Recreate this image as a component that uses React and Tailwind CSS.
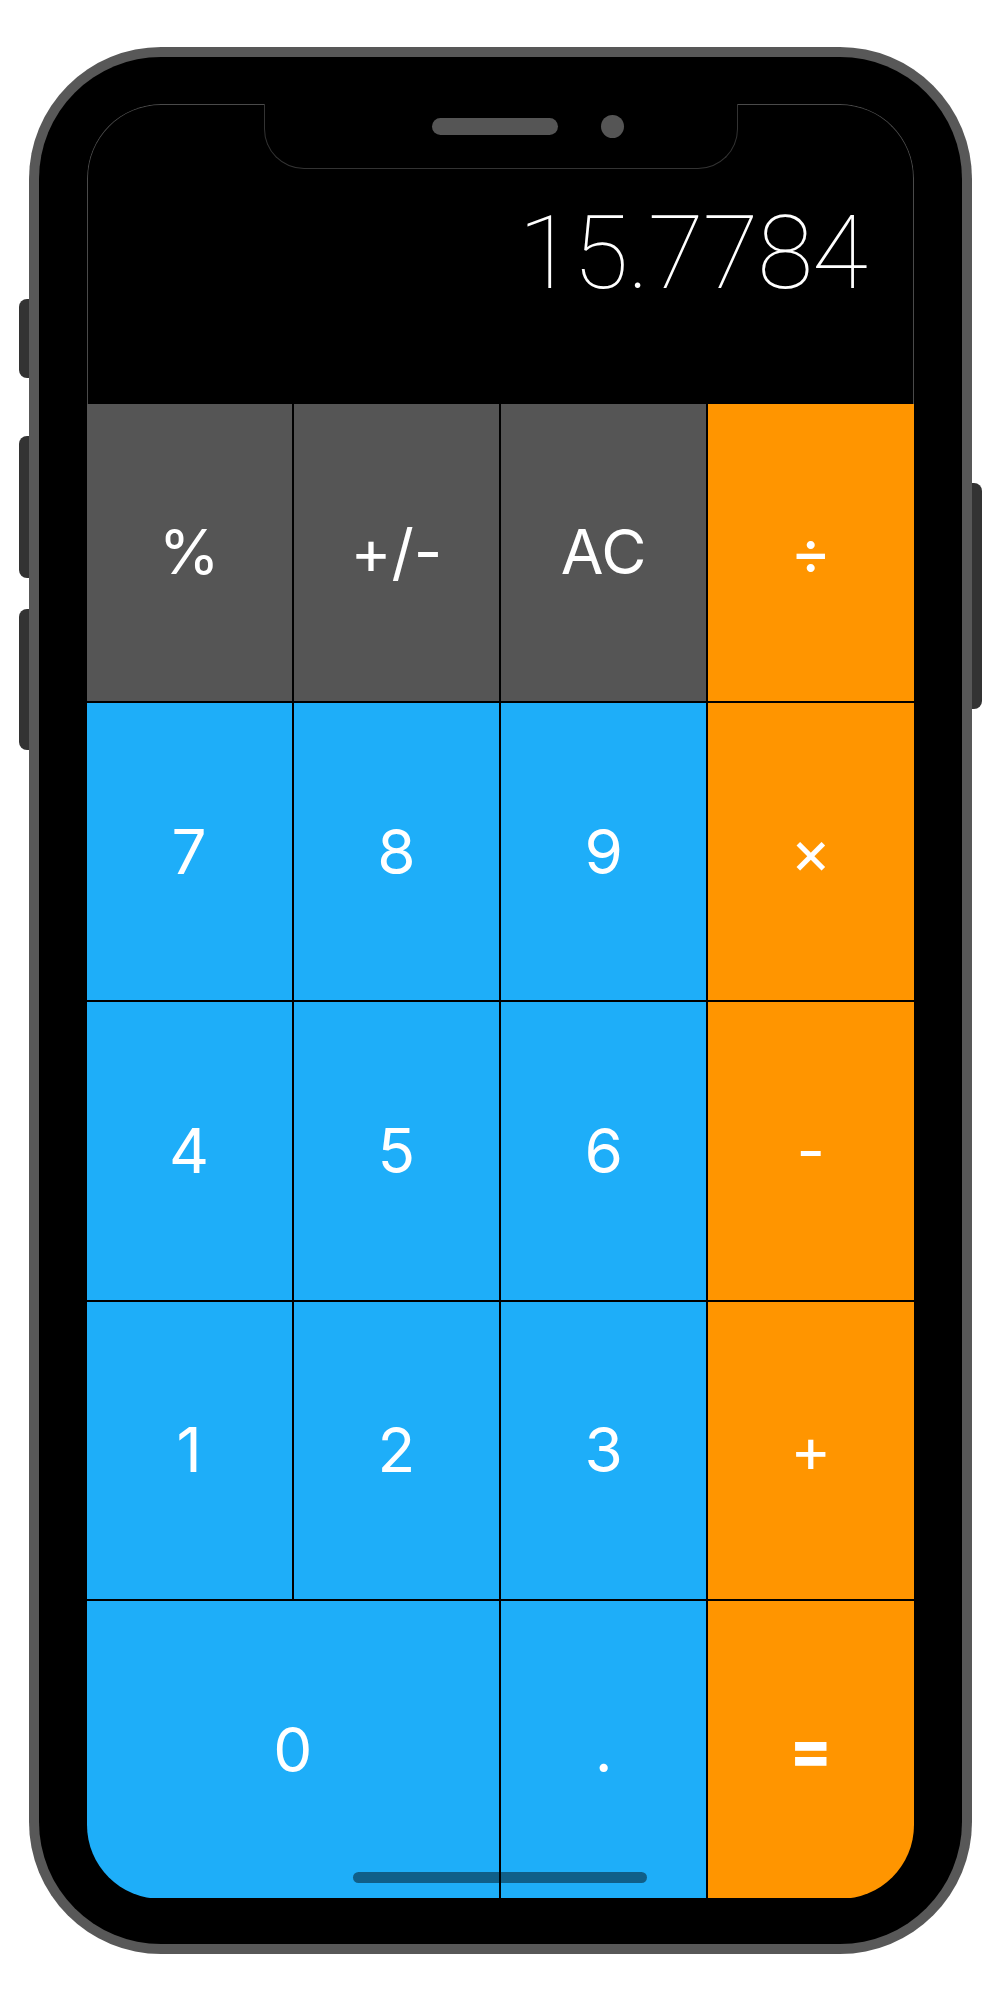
import React from 'react';

// --- Key layout ---
const KEYS = [
  { label: '%', kind: 'fn' },
  { label: '+/-', kind: 'fn' },
  { label: 'AC', kind: 'fn' },
  { label: '÷', kind: 'op' },
  { label: '7', kind: 'num' },
  { label: '8', kind: 'num' },
  { label: '9', kind: 'num' },
  { label: '×', kind: 'op' },
  { label: '4', kind: 'num' },
  { label: '5', kind: 'num' },
  { label: '6', kind: 'num' },
  { label: '-', kind: 'op' },
  { label: '1', kind: 'num' },
  { label: '2', kind: 'num' },
  { label: '3', kind: 'num' },
  { label: '+', kind: 'op' },
  { label: '0', kind: 'num', wide: true },
  { label: '.', kind: 'num' },
  { label: '=', kind: 'op', bold: true },
];

const KIND_BG = {
  fn: 'bg-[#555555]',
  num: 'bg-[#1eaef9]',
  op: 'bg-[#ff9500]',
};

export default function App() {
  return (
    <div className="w-[1000px] h-[2000px] bg-white flex items-center justify-center">
      <Phone>
        <Calculator display="15.7784" />
      </Phone>
    </div>
  );
}

// --- Phone frame ---
const Phone = ({ children }) => (
  <div className="relative w-[943px] h-[1907px] rounded-[132px] bg-[#585858] p-[10px]">
    {/* side buttons, sticking out of the frame */}
    <div className="absolute -left-[10px] top-[252px] flex flex-col">
      <div className="w-[10px] h-[79px] rounded-l-[8px] bg-[#333333]" />
      <div className="mt-[58px] w-[10px] h-[142px] rounded-l-[8px] bg-[#333333]" />
      <div className="mt-[31px] w-[10px] h-[141px] rounded-l-[8px] bg-[#333333]" />
    </div>
    <div className="absolute -right-[10px] top-[436px] w-[10px] h-[226px] rounded-r-[8px] bg-[#333333]" />

    <div className="h-full rounded-[122px] bg-black pl-[48px] pr-[48px] pt-[47px] pb-[45px]">
      <div className="relative h-full rounded-[74px] overflow-hidden bg-black">
        {children}
        {/* screen outline around the display area */}
        <div className="absolute top-0 left-0 right-0 h-[300px] rounded-t-[74px] border border-b-0 border-[#4a4a4a] pointer-events-none" />
        {/* notch with speaker and camera */}
        <div className="absolute top-0 left-[177px] w-[474px] h-[65px] rounded-b-[40px] bg-black border border-t-0 border-[#333333]">
          <div className="h-[45px] flex items-center gap-[43px] pl-[167px]">
            <div className="w-[126px] h-[17px] rounded-full bg-[#555555]" />
            <div className="w-[23px] h-[23px] rounded-full bg-[#555555]" />
          </div>
        </div>
        {/* home indicator */}
        <div className="absolute bottom-[16px] left-1/2 -translate-x-1/2 w-[294px] h-[11px] rounded-full bg-black/45" />
      </div>
    </div>
  </div>
);

// --- Calculator ---
const Calculator = ({ display }) => (
  <div className="h-full flex flex-col">
    <div className="flex-none h-[300px] flex justify-end items-start pt-[98px] pr-[47px]">
      <span className="font-['Roboto',sans-serif] font-thin text-[102px] leading-none tracking-[-0.012em] text-white">
        {display}
      </span>
    </div>
    <div className="flex-1 grid grid-cols-4 grid-rows-5 gap-[2px] bg-black">
      {KEYS.map((key) => (
        <Key key={key.label} {...key} />
      ))}
    </div>
  </div>
);

const Key = ({ label, kind, wide, bold }) => (
  <button
    className={`${KIND_BG[kind]} ${wide ? 'col-span-2' : ''} flex items-center justify-center text-white text-[62px] leading-none font-['Inter',sans-serif] ${bold ? 'font-extrabold' : 'font-normal'}`}
  >
    {label}
  </button>
);
